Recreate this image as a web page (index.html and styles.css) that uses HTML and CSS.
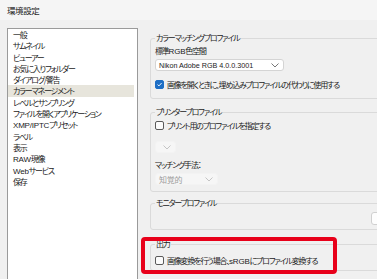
FILE: index.html
```html
<!DOCTYPE html>
<html lang="ja">
<head>
    <meta charset="UTF-8">
    <title>環境設定</title>
    <link rel="stylesheet" href="styles.css">
</head>
<body>
    <div class="window">
        <div class="titlebar">環境設定</div>
        <div class="content">
            <ul class="category-list">
                <li>一般</li>
                <li>サムネイル</li>
                <li>ビューアー</li>
                <li>お気に入りフォルダー</li>
                <li>ダイアログ/警告</li>
                <li class="selected">カラーマネージメント</li>
                <li>レベルとサンプリング</li>
                <li>ファイルを開くアプリケーション</li>
                <li><span class="latin">XMP/IPTC</span>プリセット</li>
                <li>ラベル</li>
                <li>表示</li>
                <li><span class="latin">RAW</span>現像</li>
                <li><span class="latin">Web</span>サービス</li>
                <li>保存</li>
            </ul>
            <div class="settings">
                <div class="group group-matching">
                    <div class="group-title">カラーマッチングプロファイル</div>
                    <div class="field-label">標準<span class="latin">RGB</span>色空間</div>
                    <div class="select select-wide">
                        <span>Nikon Adobe RGB 4.0.0.3001</span>
                        <svg class="chevron" width="8" height="5" viewBox="0 0 8 5"><path d="M0.5 0.5 L4 4 L7.5 0.5" fill="none" stroke="#777" stroke-width="1"/></svg>
                    </div>
                    <label class="check-row">
                        <span class="checkbox checked">
                            <svg width="9" height="9" viewBox="0 0 9 9"><path d="M2 4.6 L3.8 6.3 L7.2 2.6" fill="none" stroke="#fff" stroke-width="1.2"/></svg>
                        </span>
                        画像を開くときに、埋め込みプロファイルの代わりに使用する
                    </label>
                </div>

                <div class="group group-printer">
                    <div class="group-title">プリンタープロファイル</div>
                    <label class="check-row">
                        <span class="checkbox"></span>
                        プリント用のプロファイルを指定する
                    </label>
                    <div class="select select-tiny disabled">
                        <span></span>
                        <svg class="chevron" width="8" height="5" viewBox="0 0 8 5"><path d="M0.5 0.5 L4 4 L7.5 0.5" fill="none" stroke="#c4c4c4" stroke-width="1"/></svg>
                    </div>
                    <div class="field-label method">マッチング手法：</div>
                    <div class="select select-method disabled">
                        <span>知覚的</span>
                        <svg class="chevron" width="8" height="5" viewBox="0 0 8 5"><path d="M0.5 0.5 L4 4 L7.5 0.5" fill="none" stroke="#c4c4c4" stroke-width="1"/></svg>
                    </div>
                </div>

                <div class="group group-monitor">
                    <div class="group-title">モニタープロファイル</div>
                    <div class="monitor-body">
                        <div class="button"></div>
                    </div>
                </div>

                <div class="group group-output">
                    <div class="group-title">出力</div>
                    <label class="check-row">
                        <span class="checkbox"></span>
                        <span>画像変換を行う場合、<span class="latin">sRGB</span>にプロファイル変換する</span>
                    </label>
                </div>
            </div>
        </div>
        <div class="highlight"></div>
    </div>
</body>
</html>
```

FILE: styles.css
```css
* {
    margin: 0;
    padding: 0;
    box-sizing: border-box;
}
body {
    font-family: "Noto Sans CJK JP", "Noto Sans", sans-serif;
    font-feature-settings: "palt";
    font-size: 8px;
    letter-spacing: -1.2px;
    color: #1b1b1b;
    background: #f0f0f0;
    width: 377px;
    height: 279px;
    overflow: hidden;
}
.latin {
    font-family: "Liberation Sans", sans-serif;
    letter-spacing: -0.2px;
}
.window {
    position: relative;
    width: 377px;
    height: 279px;
    overflow: hidden;
    background: #f0f0f0;
}
.titlebar {
    height: 20px;
    line-height: 20px;
    padding-left: 7px;
    font-size: 8.5px;
    letter-spacing: -0.4px;
    background: #f5f5f5;
}
.content {
    display: flex;
    padding-top: 8px;
    padding-left: 7px;
}
.category-list {
    list-style: none;
    width: 131px;
    height: 270px;
    flex: none;
    background: #fff;
    border: 1px solid #9a9a9a;
}
.category-list li {
    height: 11.3px;
    line-height: 11.3px;
    padding-left: 5px;
    margin-right: 3px;
    white-space: nowrap;
}
.category-list li.selected {
    background: #e7e5dc;
}
.settings {
    width: 270px;
    flex: none;
    margin-left: 12px;
    padding-top: 10px;
}
.group {
    border: 1px solid #dadada;
    border-radius: 3px;
    padding: 0 4px;
}
.group-title {
    display: table;
    margin-top: -7px;
    padding: 0 1px;
    line-height: 12px;
    background: #f0f0f0;
    white-space: nowrap;
}
.field-label {
    margin-top: 1px;
    line-height: 12px;
}
.select {
    display: flex;
    align-items: center;
    justify-content: space-between;
    height: 12px;
    margin-top: 1px;
    padding: 0 4px 0 3px;
    background: #fff;
    border: 1px solid #d4d4d4;
    border-radius: 3px;
    font-family: "Liberation Sans", "Noto Sans CJK JP", sans-serif;
    font-size: 7.2px;
    letter-spacing: 0;
    white-space: nowrap;
}
.select-wide {
    width: 129px;
}
.select.disabled {
    background: #f6f6f6;
    border-color: #f3f3f3;
    color: #9c9c9c;
    font-family: "Noto Sans CJK JP", sans-serif;
    font-size: 8px;
    letter-spacing: -0.3px;
}
.select-tiny {
    width: 21px;
    margin-top: 11px;
}
.select-method {
    width: 63px;
    margin-top: 2px;
}
.check-row {
    display: flex;
    align-items: center;
    gap: 3px;
    height: 10px;
    white-space: nowrap;
}
.checkbox {
    display: flex;
    align-items: center;
    justify-content: center;
    width: 9px;
    height: 9px;
    flex: none;
    border: 1px solid #5a5a5a;
    border-radius: 2px;
    background: #fbfbfb;
}
.checkbox.checked {
    background: #1f6fc5;
    border-color: #1f6fc5;
}
.group-matching {
    margin-top: 0;
    padding-bottom: 9px;
}
.group-matching .check-row {
    margin-top: 8px;
}
.group-printer {
    margin-top: 13px;
    padding-bottom: 6px;
}
.group-printer .check-row {
    margin-top: 2px;
}
.field-label.method {
    margin-top: 6px;
}
.group-monitor {
    margin-top: 11px;
}
.monitor-body {
    display: flex;
    justify-content: flex-end;
    height: 20px;
    padding-top: 3px;
}
.button {
    width: 44px;
    height: 13px;
    background: #fdfdfd;
    border: 1px solid #d0d0d0;
    border-radius: 3px;
}
.group-output {
    margin-top: 14px;
    padding-bottom: 5px;
}
.group-output .check-row {
    margin-top: 5px;
}
.highlight {
    position: absolute;
    left: 141px;
    top: 237px;
    width: 196px;
    height: 37px;
    border: 4px solid #e8001a;
    border-radius: 4px;
}
```
